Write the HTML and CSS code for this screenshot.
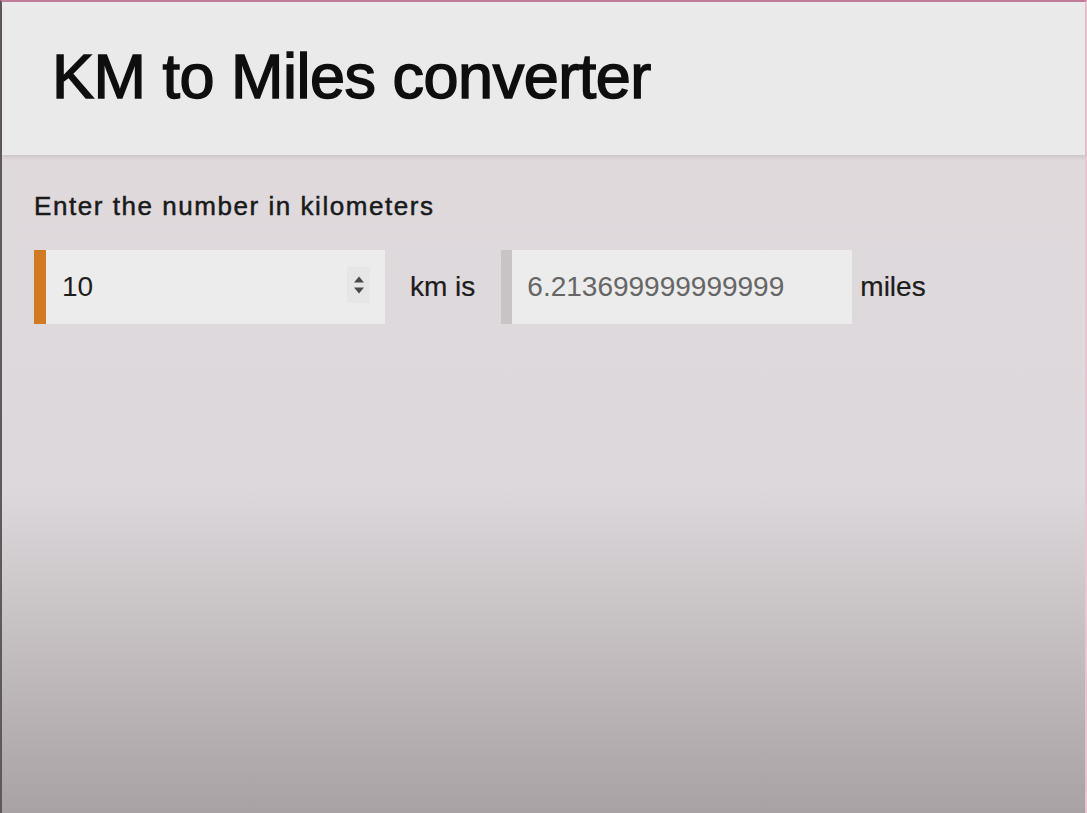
FILE: index.html
```html
<!DOCTYPE html>
<html lang="en">
<head>
<meta charset="utf-8">
<title>KM to Miles converter</title>
<link rel="stylesheet" href="styles.css">
</head>
<body>
<div class="frame">
  <header class="topbar">
    <h1 class="title">KM to Miles converter</h1>
  </header>
  <main class="content">
    <label class="prompt" for="km">Enter the number in kilometers</label>
    <div class="row">
      <div class="field field-active">
        <input id="km" class="field-input" type="text" value="10">
        <span class="spinner" aria-hidden="true">
          <svg width="14" height="22" viewBox="0 0 14 22"><path d="M2 8.5 L7 2.5 L12 8.5 Z" fill="#4a4a4a"/><path d="M2 13.5 L7 19.5 L12 13.5 Z" fill="#4a4a4a"/></svg>
        </span>
      </div>
      <span class="unit unit-km">km is</span>
      <div class="field field-readonly">
        <input class="field-input output" type="text" value="6.213699999999999" readonly>
      </div>
      <span class="unit unit-miles">miles</span>
    </div>
  </main>
</div>
</body>
</html>
```
FILE: styles.css
```css
* { box-sizing: border-box; }
html, body { margin: 0; padding: 0; }
body { font-family: "Liberation Sans", Arial, sans-serif; }

.frame {
  min-height: 100vh;
  border-top: 2px solid #c47d9b;
  border-left: 2px solid #5e5a5c;
  border-right: 2px solid #ecc3d0;
  background: linear-gradient(to bottom, #e0dadd 0%, #ddd8db 60%, #a8a2a4 100%);
  display: flex;
  flex-direction: column;
}

.topbar {
  height: 153px;
  background: #ebeaea;
  padding: 43px 0 0 50px;
  box-shadow: 0 2px 4px rgba(0, 0, 0, 0.10);
}

.title {
  margin: 0;
  font-family: "Liberation Sans", Arial, sans-serif;
  font-weight: 400;
  font-size: 63px;
  line-height: 63px;
  letter-spacing: -0.5px;
  color: #0e0e0e;
  -webkit-text-stroke: 1.5px #0e0e0e;
}

.content {
  padding: 37px 0 0 32px;
  display: flex;
  flex-direction: column;
}

.prompt {
  font-family: "Liberation Sans", Arial, sans-serif;
  font-size: 26px;
  line-height: 28px;
  letter-spacing: 1.55px;
  color: #1a1a1a;
  -webkit-text-stroke: 0.5px #1a1a1a;
}

.row {
  margin-top: 30px;
  display: flex;
  align-items: center;
  height: 74px;
}

.field {
  position: relative;
  width: 351px;
  height: 74px;
  background: #edecec;
  display: flex;
  align-items: center;
}
.field-active { border-left: 12px solid #d07a24; }
.field-readonly { border-left: 11px solid #c8c4c6; }

.field-input {
  width: 100%;
  height: 100%;
  border: 0;
  outline: none;
  background: transparent;
  font-family: "Liberation Sans", Arial, sans-serif;
  font-size: 28px;
  color: #1e1e1e;
  padding: 0 0 0 16px;
}
.field-input.output { color: #666; padding-left: 15px; }

.spinner {
  position: absolute;
  right: 15px;
  top: 17px;
  width: 23px;
  height: 36px;
  background: #e7e6e6;
  display: flex;
  align-items: center;
  justify-content: center;
}

.unit {
  font-size: 28px;
  color: #1c1c1c;
  -webkit-text-stroke: 0.2px #1c1c1c;
}
.unit-km { margin: 0 26px 0 25px; }
.unit-miles { margin-left: 8px; }
```
